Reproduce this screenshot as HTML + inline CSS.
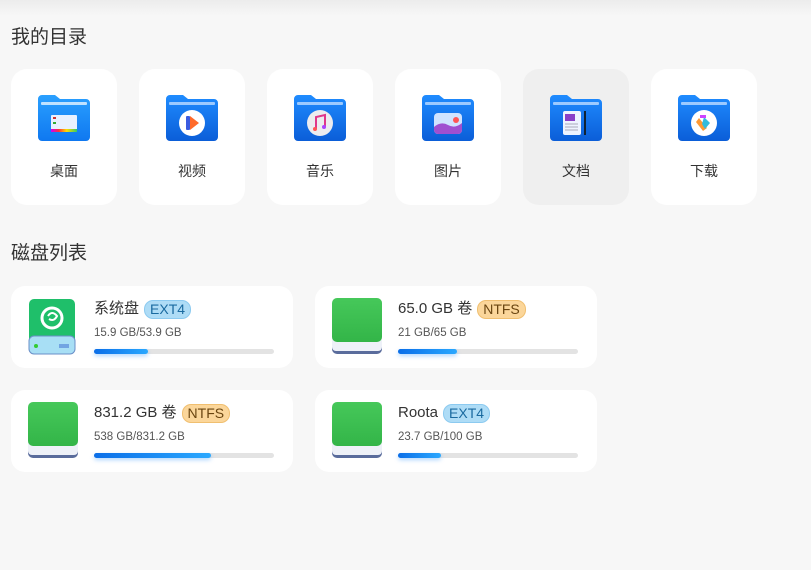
<!DOCTYPE html>
<html><head><meta charset="utf-8"><style>
*{margin:0;padding:0;box-sizing:border-box}
body{width:811px;height:570px;background:#f7f7f7;font-family:"Liberation Sans","Noto Sans CJK SC",sans-serif;color:#333;position:relative;overflow:hidden}
.top{position:absolute;left:0;top:0;width:811px;height:16px;background:linear-gradient(#ececec,#f7f7f7)}
h2{position:absolute;left:11px;font-size:19px;font-weight:normal;color:#333}
.card{position:absolute;top:69px;width:106px;height:136px;background:#fff;border-radius:16px}
.card.sel{background:#efefef}
.card svg{position:absolute;left:25px;top:24px}
.card span{position:absolute;left:0;right:0;top:92px;text-align:center;font-size:14px;color:#333}
.disk{position:absolute;width:282px;height:82px;background:#fff;border-radius:14px}
.disk .ic{position:absolute;left:17px;top:12px}
.disk .t{position:absolute;left:83px;top:13px;height:20px;font-size:15px;line-height:20px;color:#333;white-space:nowrap;display:flex;align-items:center}
.tag{display:inline-block;font-size:14px;padding:0 5px;border-radius:9px;line-height:17px;margin-left:5px}
.ext{background:#aedcf6;color:#1a6aa0;border:1px solid #8ccaf0}
.ntfs{background:#fbd69a;color:#6a4510;border:1px solid #f0bf70}
.disk .s{position:absolute;left:83px;top:41px;font-size:11.5px;color:#555}
.bar{position:absolute;left:83px;top:63px;width:180px;height:5px;background:#e3e3e3;border-radius:3px}
.bar i{display:block;height:5px;border-radius:3px;background:linear-gradient(90deg,#0a6ee8,#2aa8ff);box-shadow:0 2px 4px rgba(30,140,255,.35)}
</style></head><body>
<div class="top"></div>
<h2 style="top:22px">我的目录</h2>

<svg width="0" height="0" style="position:absolute"><defs>
<linearGradient id="fg" x1="0" y1="0" x2="0" y2="1"><stop offset="0" stop-color="#1f8cff"/><stop offset="1" stop-color="#0b5ed8"/></linearGradient>
<linearGradient id="fg2" x1="0" y1="0" x2="0" y2="1"><stop offset="0" stop-color="#2aa0ff"/><stop offset="1" stop-color="#0f78f0"/></linearGradient>
<linearGradient id="rb" x1="0" x2="1"><stop offset="0" stop-color="#c0f"/><stop offset=".3" stop-color="#f33"/><stop offset=".6" stop-color="#fd0"/><stop offset="1" stop-color="#3c6"/></linearGradient>
<linearGradient id="gr" x1="0" y1="0" x2="0" y2="1"><stop offset="0" stop-color="#46c85a"/><stop offset="1" stop-color="#33b548"/></linearGradient>
</defs></svg>

<div class="card" style="left:11px"><svg width="56" height="50"><path d="M6 2h13l5 4h26a4 4 0 0 1 4 4v34a4 4 0 0 1-4 4H6a4 4 0 0 1-4-4V6a4 4 0 0 1 4-4z" fill="url(#fg2)"/><rect x="5" y="9" width="46" height="3" rx="1" fill="#bfe2ff"/><rect x="15" y="22" width="26" height="17" rx="1" fill="#e8f1ff"/><rect x="15" y="36" width="26" height="3" fill="url(#rb)"/><rect x="17" y="24" width="3" height="2" fill="#c33"/><rect x="17" y="29" width="3" height="2" fill="#3a3"/></svg><span>桌面</span></div>

<div class="card" style="left:139px"><svg width="56" height="50"><path d="M6 2h13l5 4h26a4 4 0 0 1 4 4v34a4 4 0 0 1-4 4H6a4 4 0 0 1-4-4V6a4 4 0 0 1 4-4z" fill="url(#fg)"/><rect x="5" y="9" width="46" height="3" rx="1" fill="#9ccaff"/><circle cx="28" cy="30" r="13" fill="#fff"/><rect x="22" y="23" width="4" height="14" rx="1" fill="#3a5be0"/><path d="M26 23l9 7-9 7z" fill="#ff6a2a"/></svg><span>视频</span></div>

<div class="card" style="left:267px"><svg width="56" height="50"><path d="M6 2h13l5 4h26a4 4 0 0 1 4 4v34a4 4 0 0 1-4 4H6a4 4 0 0 1-4-4V6a4 4 0 0 1 4-4z" fill="url(#fg)"/><rect x="5" y="9" width="46" height="3" rx="1" fill="#9ccaff"/><circle cx="28" cy="30" r="13" fill="#ececef"/><path d="M24 36V24l9-2v12" stroke="#e0368a" stroke-width="2" fill="none"/><circle cx="23" cy="36" r="2" fill="#f55"/><circle cx="32" cy="34" r="2" fill="#a4f"/></svg><span>音乐</span></div>

<div class="card" style="left:395px"><svg width="56" height="50"><path d="M6 2h13l5 4h26a4 4 0 0 1 4 4v34a4 4 0 0 1-4 4H6a4 4 0 0 1-4-4V6a4 4 0 0 1 4-4z" fill="url(#fg)"/><rect x="5" y="9" width="46" height="3" rx="1" fill="#9ccaff"/><rect x="14" y="20" width="28" height="21" rx="4" fill="#cfe3ff"/><path d="M14 34q7-6 14-2t14-2v7a4 4 0 0 1-4 4H18a4 4 0 0 1-4-4z" fill="#a04fd0"/><circle cx="36" cy="27" r="3" fill="#f55"/></svg><span>图片</span></div>

<div class="card sel" style="left:523px"><svg width="56" height="50"><path d="M6 2h13l5 4h26a4 4 0 0 1 4 4v34a4 4 0 0 1-4 4H6a4 4 0 0 1-4-4V6a4 4 0 0 1 4-4z" fill="url(#fg)"/><rect x="5" y="9" width="46" height="3" rx="1" fill="#9ccaff"/><rect x="15" y="18" width="18" height="24" rx="2" fill="#eef3ff"/><rect x="17" y="21" width="10" height="7" fill="#8a3fc8"/><path d="M17 31h13M17 34h13M17 37h13" stroke="#aab" stroke-width="1"/><rect x="36" y="18" width="2" height="24" fill="#123"/></svg><span>文档</span></div>

<div class="card" style="left:651px"><svg width="56" height="50"><path d="M6 2h13l5 4h26a4 4 0 0 1 4 4v34a4 4 0 0 1-4 4H6a4 4 0 0 1-4-4V6a4 4 0 0 1 4-4z" fill="url(#fg)"/><rect x="5" y="9" width="46" height="3" rx="1" fill="#9ccaff"/><circle cx="28" cy="30" r="13" fill="#fff"/><path d="M23 25l8 10-4 3-7-9z" fill="#f93"/><path d="M28 24l6 6-5 6-3-5z" fill="#3bd"/><path d="M24 22h6v3h-6z" fill="#c4f"/></svg><span>下载</span></div>

<h2 style="top:238px">磁盘列表</h2>

<div class="disk" style="left:11px;top:286px">
<svg class="ic" width="48" height="58"><rect x="1" y="1" width="46" height="50" rx="5" fill="#1fbf6a"/><rect x="1" y="38" width="46" height="18" rx="5" fill="#a8dff5" stroke="#6a8fc8"/><circle cx="8" cy="48" r="2" fill="#3c3"/><path d="M32 46v4M34 46v4M36 46v4M38 46v4M40 46v4" stroke="#3a6ad0"/><circle cx="24" cy="20" r="10" fill="none" stroke="#fff" stroke-width="3"/><path d="M20 18q4-6 9 0q-3 6-8 3" fill="none" stroke="#fff" stroke-width="2"/></svg>
<div class="t">系统盘 <span class="tag ext">EXT4</span></div><div class="s">15.9 GB/53.9 GB</div><div class="bar"><i style="width:54px"></i></div></div>

<div class="disk" style="left:315px;top:286px">
<svg class="ic" width="52" height="58"><rect x="0" y="38" width="50" height="18" rx="5" fill="#5a6c9c"/><rect x="0" y="36" width="50" height="17" rx="4" fill="#eef1f8"/><rect x="0" y="0" width="50" height="44" rx="5" fill="url(#gr)"/></svg>
<div class="t">65.0 GB 卷 <span class="tag ntfs">NTFS</span></div><div class="s">21 GB/65 GB</div><div class="bar"><i style="width:59px"></i></div></div>

<div class="disk" style="left:11px;top:390px">
<svg class="ic" width="52" height="58"><rect x="0" y="38" width="50" height="18" rx="5" fill="#5a6c9c"/><rect x="0" y="36" width="50" height="17" rx="4" fill="#eef1f8"/><rect x="0" y="0" width="50" height="44" rx="5" fill="url(#gr)"/></svg>
<div class="t">831.2 GB 卷 <span class="tag ntfs">NTFS</span></div><div class="s">538 GB/831.2 GB</div><div class="bar"><i style="width:117px"></i></div></div>

<div class="disk" style="left:315px;top:390px">
<svg class="ic" width="52" height="58"><rect x="0" y="38" width="50" height="18" rx="5" fill="#5a6c9c"/><rect x="0" y="36" width="50" height="17" rx="4" fill="#eef1f8"/><rect x="0" y="0" width="50" height="44" rx="5" fill="url(#gr)"/></svg>
<div class="t">Roota <span class="tag ext">EXT4</span></div><div class="s">23.7 GB/100 GB</div><div class="bar"><i style="width:43px"></i></div></div>
</body></html>
